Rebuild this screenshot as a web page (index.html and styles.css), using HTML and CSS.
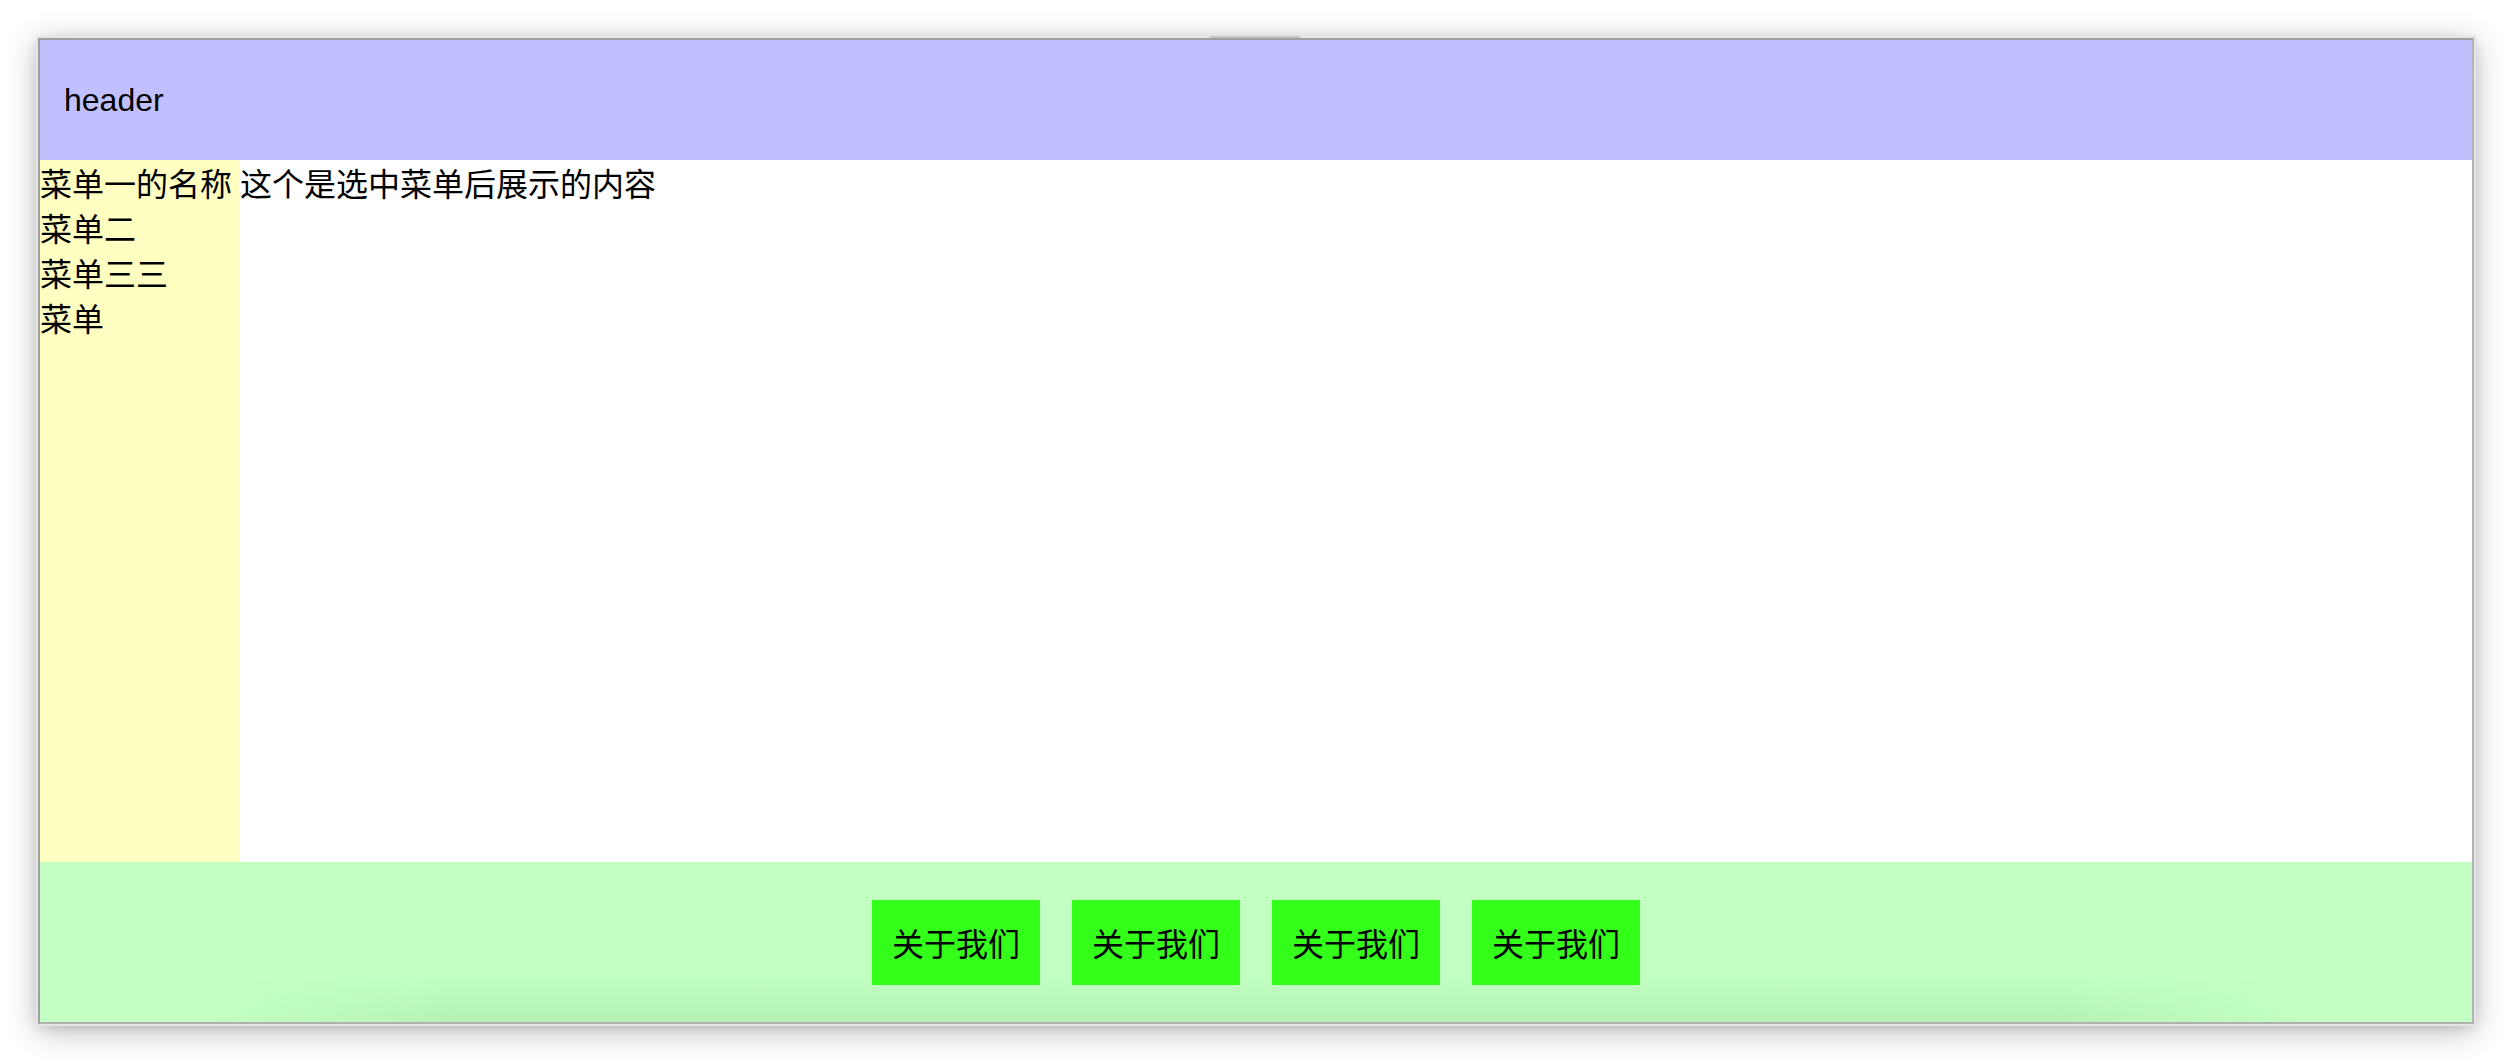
FILE: index.html
```html
<!DOCTYPE html>
<html lang="zh-CN">
<head>
<meta charset="utf-8">
<title>layout</title>
<link rel="stylesheet" href="styles.css">
</head>
<body>
<div class="stage">
  <div class="window">
    <div class="window-tab"></div>
    <header class="header"><span class="header-text">header</span></header>
    <div class="main">
      <nav class="sidebar">
        <div class="menu-item">菜单一的名称</div>
        <div class="menu-item">菜单二</div>
        <div class="menu-item">菜单三三</div>
        <div class="menu-item">菜单</div>
      </nav>
      <section class="content">这个是选中菜单后展示的内容</section>
    </div>
    <footer class="footer">
      <div class="btn">关于我们</div>
      <div class="btn">关于我们</div>
      <div class="btn">关于我们</div>
      <div class="btn">关于我们</div>
    </footer>
  </div>
</div>
</body>
</html>
```
FILE: styles.css
```css
html, body {
  margin: 0;
  padding: 0;
  background: #ffffff;
}

body {
  width: 2514px;
  height: 1062px;
  overflow: hidden;
  font-family: "Noto Sans CJK SC", "Liberation Sans", sans-serif;
  color: #000;
}

.stage {
  padding: 38px 40px 0 38px;
}

.window {
  position: relative;
  width: 2432px;
  height: 982px;
  display: flex;
  flex-direction: column;
  border-style: solid;
  border-width: 2px;
  border-color: #a0a0a0 #b4b4b4 #b0b0b0 #9e9e9e;
  box-shadow:
    0 0 0 2px #e6e6e6,
    0 6px 30px rgba(0, 0, 0, 0.30),
    0 2px 10px rgba(0, 0, 0, 0.12);
  background: #fff;
}

.window-tab {
  position: absolute;
  top: -4px;
  left: 1170px;
  width: 90px;
  height: 2px;
  background: #c6c6c6;
}

.header {
  height: 120px;
  flex: none;
  background: #c0c0ff;
  display: flex;
  align-items: center;
  padding-left: 24px;
}

.header-text {
  font-family: "Liberation Sans", Arial, sans-serif;
  font-size: 32px;
  line-height: 45px;
}

.main {
  flex: 1;
  display: flex;
  min-height: 0;
}

.sidebar {
  width: 200px;
  flex: none;
  background: #ffffc2;
}

.menu-item,
.content {
  font-size: 32px;
  line-height: 45px;
  white-space: nowrap;
}

.content {
  flex: 1;
  background: #fff;
}

.footer {
  position: relative;
  height: 160px;
  flex: none;
  background: #c3ffc3;
  display: flex;
  justify-content: center;
  align-items: center;
  gap: 32px;
  overflow: hidden;
}

.footer::after {
  content: "";
  position: absolute;
  left: 170px;
  right: 170px;
  bottom: 0;
  height: 48px;
  background: linear-gradient(to bottom, rgba(0, 70, 0, 0) 0%, rgba(0, 70, 0, 0.075) 100%);
  -webkit-mask-image: linear-gradient(to right, transparent 0%, #000 12%, #000 88%, transparent 100%);
  mask-image: linear-gradient(to right, transparent 0%, #000 12%, #000 88%, transparent 100%);
  pointer-events: none;
}

.btn {
  position: relative;
  z-index: 1;
  padding: 20px;
  background: #33ff1a;
  font-size: 32px;
  line-height: 45px;
  white-space: nowrap;
}
```
